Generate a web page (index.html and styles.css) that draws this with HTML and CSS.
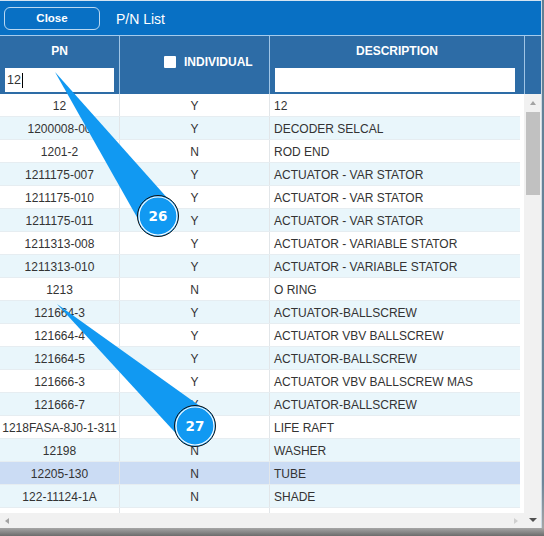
FILE: index.html
```html
<!DOCTYPE html>
<html>
<head>
<meta charset="utf-8">
<link rel="stylesheet" href="styles.css">
</head>
<body>
<div class="screen">
  <div class="dialog">
    <div class="titlebar">
      <div class="close">Close</div>
      <div class="title">P/N List</div>
    </div>
    <div class="grid-head">
      <div class="hcell c1">
        <div class="hlabel">PN</div>
        <div class="filter f1"><span class="ftext">12</span><span class="caret"></span></div>
      </div>
      <div class="hcell c2">
        <span class="cbox"></span><span class="hlabel">INDIVIDUAL</span>
      </div>
      <div class="hcell c3">
        <div class="hlabel">DESCRIPTION</div>
        <div class="filter f3"></div>
      </div>
      <div class="hcell c4"></div>
    </div>
    <div class="grid-body">
      <div class="main">
        <div class="rows">
          <div class="row"><div class="cell pn">12</div><div class="cell ind">Y</div><div class="cell desc">12</div></div>
          <div class="row alt"><div class="cell pn">1200008-00</div><div class="cell ind">Y</div><div class="cell desc">DECODER SELCAL</div></div>
          <div class="row"><div class="cell pn">1201-2</div><div class="cell ind">N</div><div class="cell desc">ROD END</div></div>
          <div class="row alt"><div class="cell pn">1211175-007</div><div class="cell ind">Y</div><div class="cell desc">ACTUATOR - VAR STATOR</div></div>
          <div class="row"><div class="cell pn">1211175-010</div><div class="cell ind">Y</div><div class="cell desc">ACTUATOR - VAR STATOR</div></div>
          <div class="row alt"><div class="cell pn">1211175-011</div><div class="cell ind">Y</div><div class="cell desc">ACTUATOR - VAR STATOR</div></div>
          <div class="row"><div class="cell pn">1211313-008</div><div class="cell ind">Y</div><div class="cell desc">ACTUATOR - VARIABLE STATOR</div></div>
          <div class="row alt"><div class="cell pn">1211313-010</div><div class="cell ind">Y</div><div class="cell desc">ACTUATOR - VARIABLE STATOR</div></div>
          <div class="row"><div class="cell pn">1213</div><div class="cell ind">N</div><div class="cell desc">O RING</div></div>
          <div class="row alt"><div class="cell pn">121664-3</div><div class="cell ind">Y</div><div class="cell desc">ACTUATOR-BALLSCREW</div></div>
          <div class="row"><div class="cell pn">121664-4</div><div class="cell ind">Y</div><div class="cell desc">ACTUATOR VBV BALLSCREW</div></div>
          <div class="row alt"><div class="cell pn">121664-5</div><div class="cell ind">Y</div><div class="cell desc">ACTUATOR-BALLSCREW</div></div>
          <div class="row"><div class="cell pn">121666-3</div><div class="cell ind">Y</div><div class="cell desc">ACTUATOR VBV BALLSCREW MAS</div></div>
          <div class="row alt"><div class="cell pn">121666-7</div><div class="cell ind">Y</div><div class="cell desc">ACTUATOR-BALLSCREW</div></div>
          <div class="row"><div class="cell pn">1218FASA-8J0-1-311</div><div class="cell ind">Y</div><div class="cell desc">LIFE RAFT</div></div>
          <div class="row alt"><div class="cell pn">12198</div><div class="cell ind">N</div><div class="cell desc">WASHER</div></div>
          <div class="row sel"><div class="cell pn">12205-130</div><div class="cell ind">N</div><div class="cell desc">TUBE</div></div>
          <div class="row alt"><div class="cell pn">122-11124-1A</div><div class="cell ind">N</div><div class="cell desc">SHADE</div></div>
          <div class="row"><div class="cell pn"></div><div class="cell ind"></div><div class="cell desc"></div></div>
        </div>
        <div class="hscroll">
          <span class="arr arr-left"></span>
          <span class="arr arr-right"></span>
        </div>
      </div>
      <div class="vscroll">
        <span class="arr arr-up"></span>
        <span class="thumb"></span>
        <span class="vspace"></span>
        <span class="arr arr-down"></span>
      </div>
    </div>
  </div>
  <svg class="callouts" width="544" height="536" viewBox="0 0 544 536">
    <polygon points="55,72 142.5,227 173.5,205" fill="#1199f2"/>
    <circle cx="158" cy="216" r="20.5" fill="#1199f2" stroke="#111" stroke-width="1"/>
    <circle cx="158" cy="216" r="19" fill="none" stroke="#fff" stroke-width="1.2"/>
    <text x="158" y="221" class="num">26</text>
    <polygon points="57,304 182.5,440.5 207.5,411.5" fill="#1199f2"/>
    <circle cx="195" cy="426" r="20.5" fill="#1199f2" stroke="#111" stroke-width="1"/>
    <circle cx="195" cy="426" r="19" fill="none" stroke="#fff" stroke-width="1.2"/>
    <text x="195" y="431" class="num">27</text>
  </svg>
</div>
</body>
</html>
```

FILE: styles.css
```css
html, body {
  margin: 0;
  padding: 0;
}
body {
  width: 544px;
  height: 536px;
  overflow: hidden;
  font-family: "Liberation Sans", Arial, sans-serif;
  font-size: 12px;
  color: #333;
}
.screen {
  position: relative;
  width: 544px;
  height: 536px;
  background: linear-gradient(to bottom, #5f8096 0%, #6d8699 90%, #a6a6a6 98.5%, #6c6c6c 100%);
}
.dialog {
  width: 542px;
  height: 528px;
  box-sizing: border-box;
  border-top: 1px solid #d4e4f2;
  border-right: 1px solid #cdd9e4;
  background: #fff;
  display: flex;
  flex-direction: column;
}
.titlebar {
  height: 34px;
  flex: none;
  background: #0870c4;
  border-bottom: 1px solid #a4cbed;
  display: flex;
  align-items: center;
  padding-left: 4px;
}
.close {
  width: 96px;
  height: 23px;
  box-sizing: border-box;
  border: 1px solid #b9d8f2;
  border-radius: 6px;
  color: #fff;
  font-weight: bold;
  font-size: 11.5px;
  display: flex;
  align-items: center;
  justify-content: center;
  padding-bottom: 1px;
}
.title {
  margin-left: 16px;
  color: #fff;
  font-size: 14px;
  padding-top: 1px;
}
.grid-head {
  height: 58px;
  flex: none;
  display: flex;
  background: #2d6ca6;
}
.hcell {
  box-sizing: border-box;
  border-right: 1px solid #9fc5e6;
  color: #fff;
  font-weight: bold;
  font-size: 12px;
}
.hcell.c1 { width: 120px; padding: 8px 0 0 5px; }
.hcell.c2 {
  width: 150px;
  display: flex;
  align-items: center;
  padding: 0 0 6px 44px;
}
.hcell.c3 { width: 255px; padding: 8px 0 0 5px; }
.hcell.c4 { width: 16px; border-right: none; }
.hlabel {
  line-height: 14px;
  text-align: center;
}
.c1 .hlabel { padding-right: 5px; }
.c3 .hlabel { padding-right: 5px; }
.cbox {
  width: 12px;
  height: 12px;
  background: #fff;
  border-radius: 1px;
  margin-right: 8px;
  flex: none;
}
.filter {
  margin-top: 10px;
  height: 24px;
  background: #fff;
  box-sizing: border-box;
  display: flex;
  align-items: center;
  padding-left: 2px;
  color: #333;
  font-weight: normal;
  font-size: 12.5px;
}
.f1 { width: 109px; }
.f3 { width: 240px; margin-left: 0; }
.caret {
  width: 1px;
  height: 15px;
  background: #000;
  margin-left: 1px;
}
.grid-body {
  flex: 1;
  display: flex;
  min-height: 0;
}
.main {
  width: 524px;
  display: flex;
  flex-direction: column;
}
.rows {
  flex: 1;
  overflow: hidden;
  min-height: 0;
}
.row {
  height: 23px;
  box-sizing: border-box;
  width: 520px;
  display: flex;
  border-bottom: 1px solid #e6edf1;
  background: #fff;
}
.row.alt { background: #e9f6fb; }
.row.sel { background: #cbdcf4; }
.cell {
  box-sizing: border-box;
  padding-top: 2px;
  line-height: 20px;
  white-space: nowrap;
  overflow: hidden;
}
.cell.pn {
  width: 120px;
  text-align: center;
  border-right: 1px solid #e2e6e9;
}
.cell.ind {
  width: 150px;
  text-align: center;
  border-right: 1px solid #e2e6e9;
}
.cell.desc {
  width: 250px;
  padding-left: 4px;
}
.hscroll {
  height: 15px;
  flex: none;
  background: #f1f1f1;
  position: relative;
  display: flex;
  align-items: center;
  justify-content: space-between;
  padding: 0 6px 0 5px;
}
.vscroll {
  width: 17px;
  background: #f1f1f1;
  display: flex;
  flex-direction: column;
  align-items: center;
}
.arr {
  width: 0;
  height: 0;
  flex: none;
}
.arr-left {
  border-top: 3.5px solid transparent;
  border-bottom: 3.5px solid transparent;
  border-right: 4px solid #a3a3a3;
}
.arr-right {
  border-top: 3.5px solid transparent;
  border-bottom: 3.5px solid transparent;
  border-left: 4px solid #cfcfcf;
}
.arr-up {
  margin-top: 7px;
  border-left: 3.5px solid transparent;
  border-right: 3.5px solid transparent;
  border-bottom: 4px solid #a3a3a3;
}
.thumb {
  margin-top: 7px;
  width: 14px;
  height: 83px;
  background: #c1c1c1;
  margin-left: 1px;
}
.vspace { flex: 1; }
.arr-down {
  margin-bottom: 6px;
  border-left: 4px solid transparent;
  border-right: 4px solid transparent;
  border-top: 4px solid #505050;
}
.callouts {
  position: absolute;
  left: 0;
  top: 0;
  pointer-events: none;
}
.num {
  font-family: "DejaVu Sans", sans-serif;
  font-weight: bold;
  font-size: 13.5px;
  fill: #fff;
  text-anchor: middle;
}
```
